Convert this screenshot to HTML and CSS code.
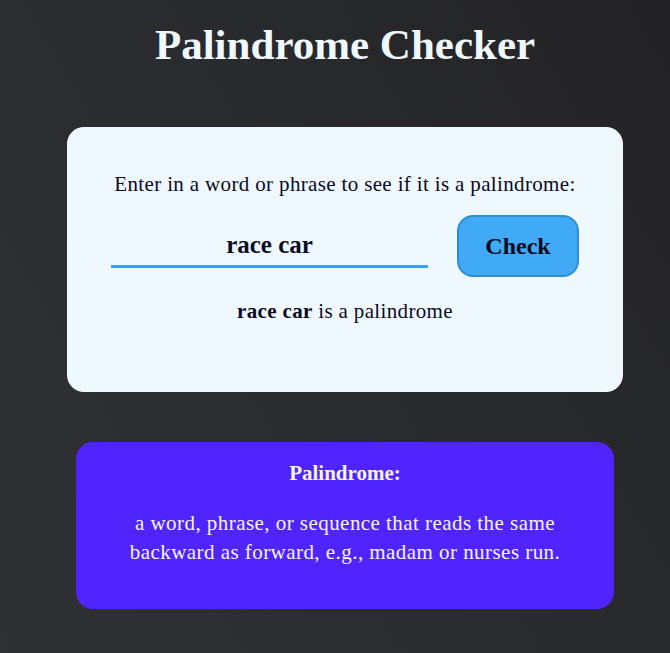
FILE: index.html
```html
<!DOCTYPE html>
<html lang="en">
<head>
<meta charset="utf-8">
<title>Palindrome Checker</title>
<link rel="stylesheet" href="styles.css">
</head>
<body>
<main class="page">
  <h1 class="title">Palindrome Checker</h1>
  <section class="checker">
    <p class="prompt">Enter in a word or phrase to see if it is a palindrome:</p>
    <div class="row">
      <input class="text-input" type="text" value="race car">
      <button class="check-btn" type="button">Check</button>
    </div>
    <p class="result"><strong>race car</strong> is a palindrome</p>
  </section>
  <section class="definition">
    <p class="def-title">Palindrome:</p>
    <p class="def-text">a word, phrase, or sequence that reads the same backward as forward, e.g., madam or nurses run.</p>
  </section>
</main>
</body>
</html>
```

FILE: styles.css
```css
* { box-sizing: border-box; }

html, body {
  margin: 0;
  height: 100%;
}

body {
  background: linear-gradient(60deg, #303135 0%, #2a2b2e 50%, #232325 100%);
  font-family: "Liberation Serif", "Times New Roman", serif;
  color: #0a0a23;
  overflow: hidden;
}

.page {
  display: flex;
  flex-direction: column;
  align-items: center;
  padding-left: 20px;
}

.title {
  margin: 20px 0 0;
  font-size: 43px;
  line-height: 49px;
  font-weight: 700;
  color: #f0f8ff;
}

.checker {
  margin-top: 58px;
  width: 556px;
  background: #f0f8ff;
  border-radius: 17px;
  padding: 45px 44px 68px;
  display: flex;
  flex-direction: column;
  align-items: center;
}

.prompt {
  margin: 0 0 18px;
  font-size: 21px;
  line-height: 25px;
  letter-spacing: 0.35px;
}

.row {
  width: 100%;
  display: flex;
  justify-content: space-between;
  align-items: center;
}

.text-input {
  width: 317px;
  height: 44px;
  border: none;
  border-bottom: 3px solid #3aa2e8;
  background: transparent;
  font-family: inherit;
  font-size: 25px;
  font-weight: 700;
  color: #0a0a23;
  text-align: center;
  padding: 0;
  outline: none;
}

.check-btn {
  width: 122px;
  height: 62px;
  border: 2px solid #2f8dd2;
  border-radius: 16px;
  background: #40aaf6;
  font-family: inherit;
  font-size: 24px;
  font-weight: 700;
  color: #0a0a23;
  padding: 0;
}

.result {
  margin: 22px 0 0;
  font-size: 21px;
  line-height: 25px;
  letter-spacing: 0.35px;
}

.definition {
  margin-top: 50px;
  width: 538px;
  background: #5024fd;
  border-radius: 17px;
  padding: 19px 40px 42px;
  color: #f5f6f7;
  text-align: center;
}

.def-title {
  margin: 0 0 23px;
  font-size: 21px;
  line-height: 25px;
  font-weight: 700;
}

.def-text {
  margin: 0;
  font-size: 21px;
  line-height: 29px;
  letter-spacing: 0.45px;
  padding: 0 10px;
}
```
